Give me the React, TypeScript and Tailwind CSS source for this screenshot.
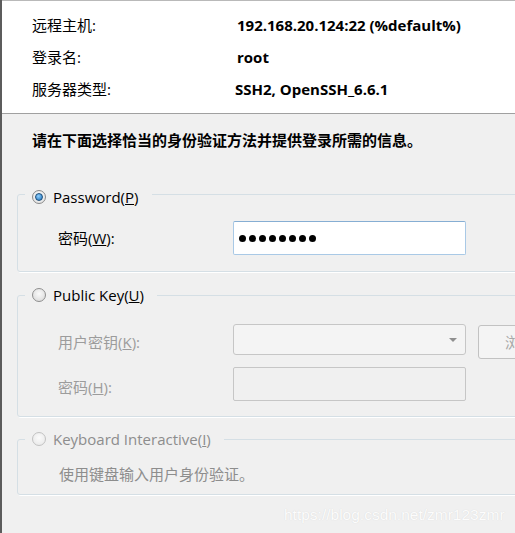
import React from 'react'

const FONT = 'font-["Open_Sans","Noto_Sans_CJK_SC",sans-serif]'

function Radio({ checked, disabled }: { checked?: boolean; disabled?: boolean }) {
  if (checked) {
    return (
      <span className="w-[14px] h-[14px] rounded-full border border-[#8a8a8a] bg-[radial-gradient(circle_at_50%_40%,#ffffff,#dcdcdc)] flex items-center justify-center shrink-0">
        <span className="w-[8px] h-[8px] rounded-full border border-[#1f4f7a] bg-[radial-gradient(circle_at_40%_35%,#8fd0ff,#1c6fb8)]" />
      </span>
    )
  }
  return (
    <span
      className={
        disabled
          ? 'w-[14px] h-[14px] rounded-full border border-[#c2c2c2] bg-[radial-gradient(circle_at_50%_40%,#fbfbfb,#e6e6e6)] shrink-0'
          : 'w-[14px] h-[14px] rounded-full border border-[#8e8e8e] bg-[radial-gradient(circle_at_50%_40%,#fafafa,#d6d6d6)] shrink-0'
      }
    />
  )
}

function Group({
  label,
  checked,
  disabled,
  className,
  children,
}: {
  label: React.ReactNode
  checked?: boolean
  disabled?: boolean
  className: string
  children: React.ReactNode
}) {
  return (
    <fieldset className={`ml-[15px] w-[520px] border border-[#d5dfe5] rounded-[3px] shadow-[1px_1px_0_#ffffff] ${className}`}>
      <legend className="ml-[7px] pl-[7px] pr-[13px] h-[20px]">
        <span className={`inline-flex items-center gap-[7px] h-[20px] leading-[20px] ${disabled ? 'text-[#8d8d8d]' : 'text-black'}`}>
          <Radio checked={checked} disabled={disabled} />
          {label}
        </span>
      </legend>
      {children}
    </fieldset>
  )
}

export default function App() {
  return (
    <div className={`relative w-[515px] h-[533px] overflow-hidden bg-[#f0f0f0] border-l-2 border-l-[#5c5c5c] text-[15px] text-black ${FONT}`}>
      {/* host info */}
      <div className="h-[114px] bg-white border-t border-t-[#b9b9b9] border-b border-b-[#a0a0a0] pl-[30px] pt-[8px] grid grid-cols-[205px_1fr] auto-rows-[32px] items-center leading-[20px]">
        <span>远程主机:</span>
        <span className="font-bold">192.168.20.124:22 (%default%)</span>
        <span>登录名:</span>
        <span className="font-bold">root</span>
        <span>服务器类型:</span>
        <span className="font-bold -ml-[2px]">SSH2, OpenSSH_6.6.1</span>
      </div>

      <div className="mt-[16px] pl-[30px] font-bold leading-[20px]">
        请在下面选择恰当的身份验证方法并提供登录所需的信息。
      </div>

      <Group
        className="mt-[34px]"
        checked
        label={
          <span>
            Password(<u>P</u>)
          </span>
        }
      >
        <div className="pt-[17px] pb-[16px] pl-[40px] flex items-center">
          <span className="w-[175px] leading-[20px]">
            密码(<u>W</u>):
          </span>
          <div className="w-[233px] h-[34px] bg-white border border-[#a9c9e6] border-t-[#86aed3] rounded-[2px] flex items-center pl-[5px] gap-[3px]">
            {Array.from({ length: 8 }).map((_, i) => (
              <span key={i} className="w-[7px] h-[7px] rounded-full bg-black" />
            ))}
          </div>
        </div>
      </Group>

      <Group
        className="mt-[13px]"
        label={
          <span>
            Public Key(<u>U</u>)
          </span>
        }
      >
        <div className="pt-[19px] pb-[15px] pl-[40px] text-[#9c9c9c]">
          <div className="flex h-[35px]">
            <span className="w-[175px] leading-[20px] self-center">
              用户密钥(<u>K</u>):
            </span>
            <div className="w-[233px] h-[31px] bg-[#f4f4f4] border border-[#c6c6c6] rounded-[3px] flex items-center justify-end pr-[8px]">
              <span className="w-0 h-0 border-l-[4px] border-r-[4px] border-t-[4px] border-l-transparent border-r-transparent border-t-[#8f8f8f]" />
            </div>
            <div className="ml-[12px] mt-[1px] w-[90px] h-[34px] bg-[#f4f4f4] border border-[#c2c2c2] rounded-[3px] flex items-center pl-[26px] leading-[20px] text-[#a8a8a8]">
              浏览(B)...
            </div>
          </div>
          <div className="mt-[8px] flex">
            <span className="w-[175px] leading-[20px] mt-[10px]">
              密码(<u>H</u>):
            </span>
            <div className="w-[233px] h-[34px] bg-[#f0f0f0] border border-[#c6c6c6] rounded-[2px]" />
          </div>
        </div>
      </Group>

      <Group
        className="mt-[12px]"
        disabled
        label={
          <span>
            Keyboard Interactive(<u>I</u>)
          </span>
        }
      >
        <div className="pt-[15px] pb-[10px] pl-[41px] leading-[20px] text-[#8d8d8d]">
          使用键盘输入用户身份验证。
        </div>
      </Group>

      <div className='absolute left-[282px] top-[505px] text-[15.5px] leading-[20px] font-["Liberation_Sans",sans-serif] text-[#fcfcfc] [text-shadow:0_0_1px_#d2d2d2]'>
        https://blog.csdn.net/zmr123zmr
      </div>
    </div>
  )
}
